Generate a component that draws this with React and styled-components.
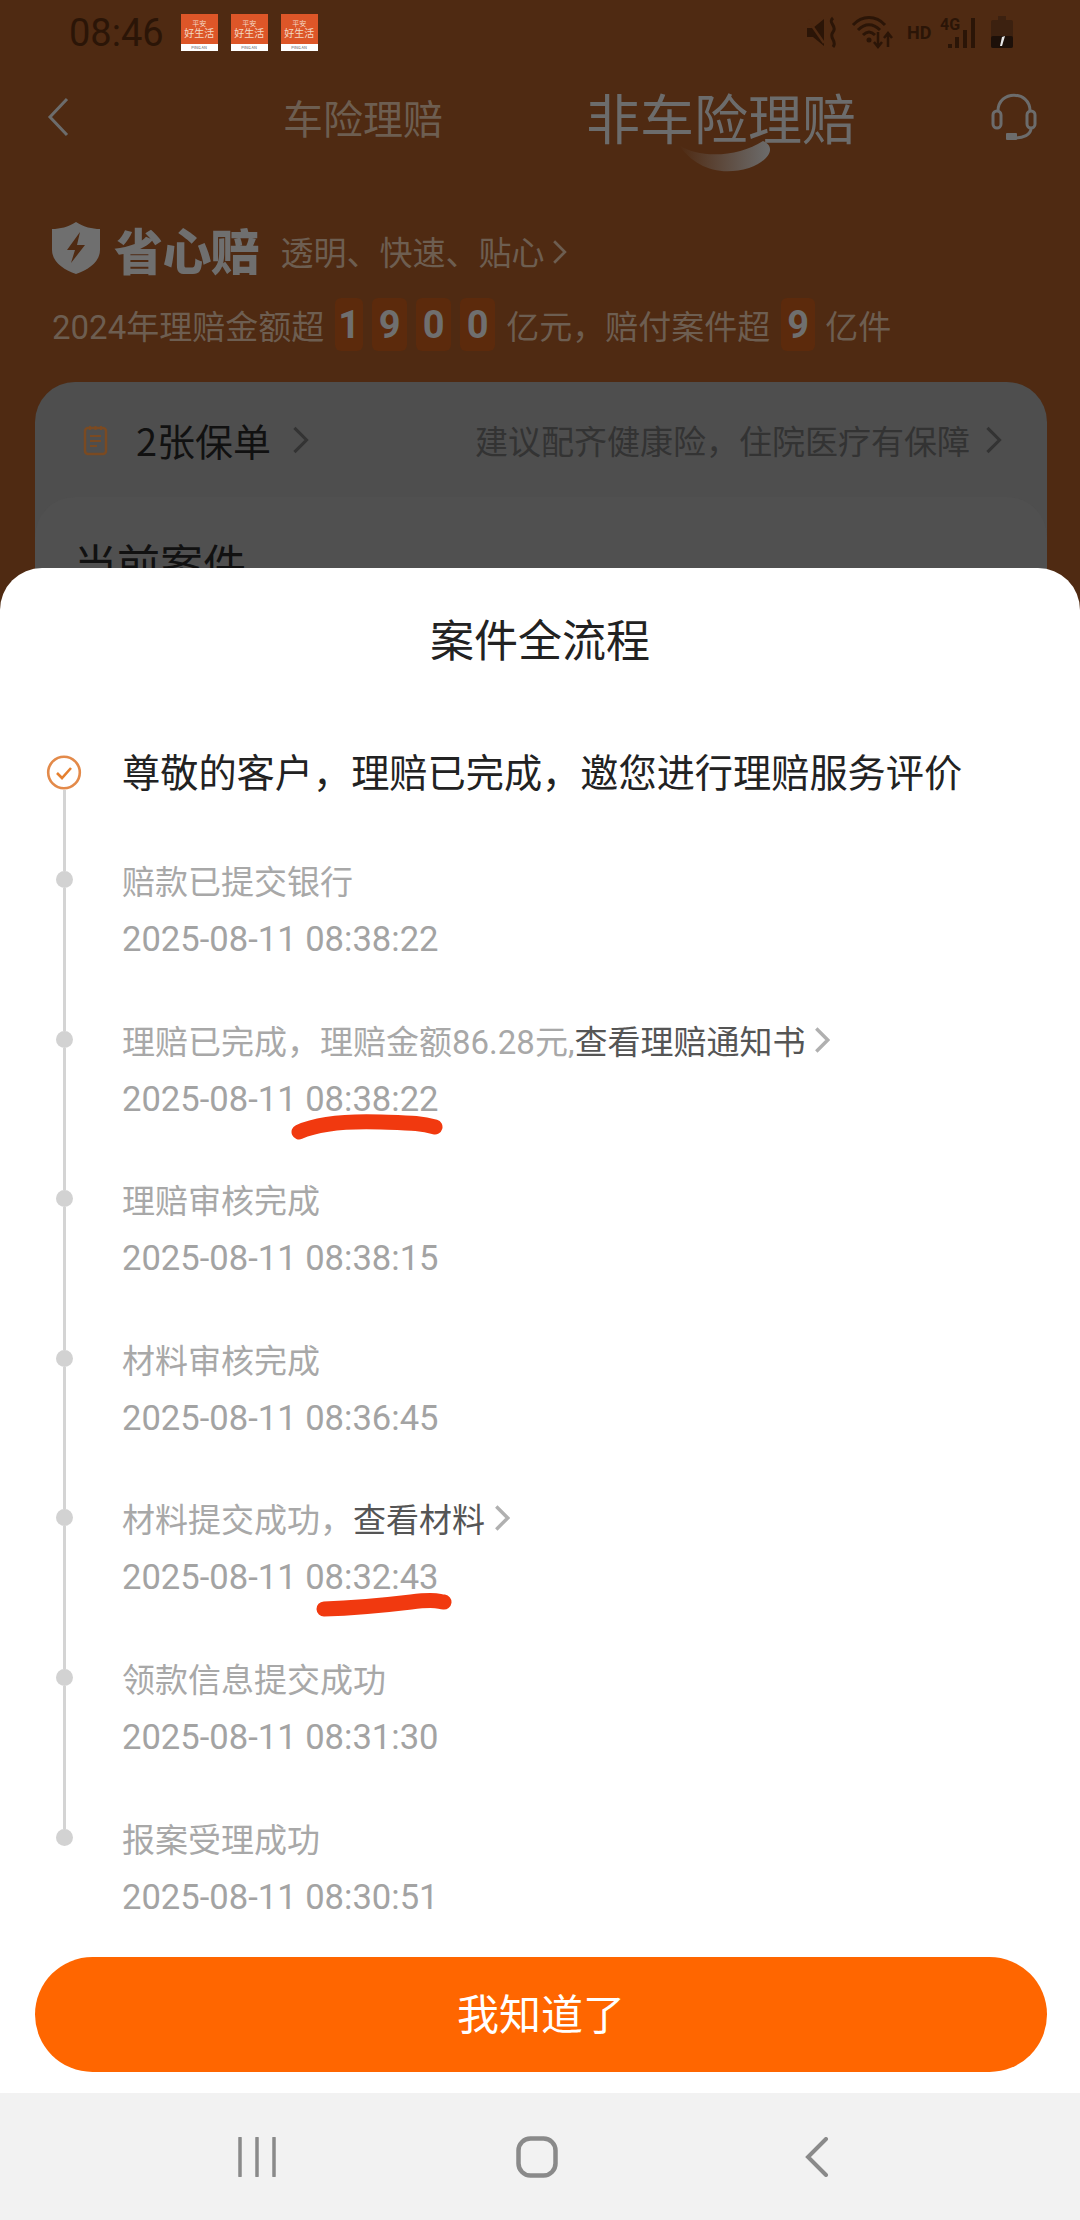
import React from "react";
import styled, { createGlobalStyle } from "styled-components";

const GlobalStyle = createGlobalStyle`
  html, body {
    margin: 0;
    padding: 0;
    background: #fff;
  }
  * {
    box-sizing: border-box;
  }
  body {
    font-family: Roboto, "Noto Sans CJK SC", sans-serif;
  }
`;

// fullwidth comma, written as an escape so it can't get swapped for the ascii one
const COMMA = "\uFF0C";

const Screen = styled.div`
  width: 1080px;
  height: 2220px;
  display: flex;
  flex-direction: column;
  overflow: hidden;
`;

const Backdrop = styled.main`
  position: relative;
  height: 2093px;
  background: #4f2a12;
  overflow: hidden;
`;

/* status bar */
const StatusBar = styled.div`
  height: 64px;
  display: flex;
  align-items: center;
  padding: 0 67px 0 69px;
`;

const Clock = styled.span`
  font-size: 38px;
  color: #2b1507;
  margin-right: 17px;
  margin-top: 2px;
`;

const AppBadge = styled.div`
  width: 37px;
  height: 37px;
  margin-right: 13px;
  background: #fff;
  display: flex;
  flex-direction: column;
  font-family: "Noto Sans CJK SC", sans-serif;
  overflow: hidden;
`;

const BadgeTop = styled.div`
  height: 30px;
  flex: none;
  background: #dd5628;
  color: #f3d9c4;
  display: flex;
  flex-direction: column;
  align-items: center;
  justify-content: center;
`;

const BadgeSmall = styled.span`
  font-size: 7px;
  line-height: 8px;
`;

const BadgeBig = styled.span`
  font-size: 10px;
  line-height: 12px;
  white-space: nowrap;
`;

const BadgeFoot = styled.span`
  font-size: 4px;
  line-height: 7px;
  text-align: center;
  color: #555;
`;

const StatusIcons = styled.div`
  margin-left: auto;
  display: flex;
  align-items: center;
  gap: 14px;
`;

const StatusSvg = styled.svg`
  display: block;
  fill: none;
  stroke: #2b1507;
  overflow: visible;
`;

const HdLabel = styled.span`
  font-size: 18px;
  font-weight: 700;
  color: #2b1507;
  width: 26px;
  margin-right: -7px;
`;

/* title row */
const TitleRow = styled.div`
  height: 106px;
  display: flex;
  align-items: center;
  padding: 0 43px 0 47px;
  font-family: "Noto Sans CJK SC", sans-serif;
`;

const Tab = styled.span`
  position: relative;
  line-height: 1;
  color: ${(p) => (p.$active ? "#6c6c6c" : "#6d5e51")};
  font-size: ${(p) => (p.$active ? "54px" : "40px")};
  margin-left: ${(p) => (p.$active ? "143px" : "214px")};
`;

const TabSmile = styled.svg`
  position: absolute;
  left: 93px;
  top: 51px;
`;

const NavIcon = styled.svg`
  display: block;
  fill: none;
  flex: none;
`;

const Push = styled.div`
  margin-left: auto;
`;

/* promo */
const PromoRow = styled.div`
  height: 78px;
  margin-top: 39px;
  display: flex;
  align-items: center;
  padding-left: 52px;
  font-family: "Noto Sans CJK SC", sans-serif;
`;

const PromoName = styled.span`
  margin-left: 14px;
  font-size: 49px;
  font-weight: 900;
  line-height: 1;
  color: #6f6f6f;
  letter-spacing: -0.5px;
`;

const PromoText = styled.span`
  margin-left: 21px;
  margin-right: 7px;
  margin-top: 6px;
  font-size: 33px;
  color: #6d5e51;
`;

const StatsRow = styled.div`
  height: 75px;
  display: flex;
  align-items: center;
  padding-left: 52px;
  font-size: 33px;
  color: #6d5e51;
`;

const Digit = styled.span`
  width: ${(p) => p.$w || 35}px;
  height: 53px;
  margin-left: ${(p) => p.$gap || 9}px;
  margin-right: ${(p) => p.$after || 0}px;
  border-radius: 6px;
  background: #5c2a0c;
  color: #6f6f6f;
  font-weight: 700;
  font-size: 38px;
  display: flex;
  align-items: center;
  justify-content: center;
`;

/* card behind the sheet */
const Card = styled.section`
  margin: 20px 33px 0 35px;
  background: #4e4e4e;
  border-radius: 40px 40px 0 0;
  font-family: "Noto Sans CJK SC", sans-serif;
`;

const PolicyRow = styled.div`
  height: 115px;
  display: flex;
  align-items: center;
  padding: 0 45px 0 48px;
`;

const PolicyCount = styled.span`
  margin-left: 28px;
  margin-right: 21px;
  font-size: 38px;
  color: #111;
`;

const PolicyHint = styled.span`
  margin-left: auto;
  margin-right: 15px;
  font-size: 33px;
  color: #333;
`;

const CaseCard = styled.div`
  height: 300px;
  background: #505050;
  border-radius: 40px 40px 0 0;
  padding: 34px 39px;
  font-size: 43px;
  color: #111;
`;

/* bottom sheet */
const Sheet = styled.section`
  position: absolute;
  left: 0;
  right: 0;
  top: 568px;
  bottom: 0;
  background: #fff;
  border-radius: 42px 42px 0 0;
  display: flex;
  flex-direction: column;
`;

const SheetTitle = styled.h2`
  margin: 0;
  height: 140px;
  line-height: 140px;
  text-align: center;
  font-size: 44px;
  font-weight: 400;
  color: #222;
  font-family: "Noto Sans CJK SC", sans-serif;
`;

const Timeline = styled.div`
  padding: 32px 0 0 46px;
`;

const Step = styled.div`
  display: flex;
  gap: 40px;
  height: ${(p) => (p.$head ? "114px" : p.$last ? "130px" : "159.6px")};
`;

const Rail = styled.div`
  width: 36px;
  flex: none;
  display: flex;
  flex-direction: column;
  align-items: center;
`;

const RailLine = styled.div`
  width: 3px;
  background: #d4d4d4;
  height: ${(p) => (p.$fixed ? `${p.$fixed}px` : "auto")};
  flex: ${(p) => (p.$fixed ? "none" : "1")};
`;

const Dot = styled.div`
  width: 17px;
  height: 17px;
  border-radius: 50%;
  background: #d2d2d2;
  flex: none;
`;

const HeadIcon = styled.svg`
  display: block;
  flex: none;
  margin-top: 15px;
`;

const HeadText = styled.div`
  font-size: 38.2px;
  line-height: 62px;
  color: #222;
  white-space: nowrap;
  font-family: "Noto Sans CJK SC", sans-serif;
`;

const StepBody = styled.div`
  flex: 1;
`;

const StepTitle = styled.div`
  display: flex;
  align-items: center;
  height: 57px;
  padding-bottom: 5px;
  font-size: 33px;
  color: #a8a8a8;
  white-space: nowrap;
`;

const StepLink = styled.span`
  color: #555;
`;

const Chevron = styled.svg`
  display: block;
  fill: none;
  flex: none;
  margin-left: ${(p) => p.$gap || 0}px;
  margin-top: ${(p) => p.$top || 0}px;
`;

const StepDate = styled.div`
  position: relative;
  height: 57px;
  line-height: 57px;
  font-size: 34.6px;
  color: #a3a3a3;
  white-space: nowrap;
`;

const Scribble = styled.svg`
  position: absolute;
  left: ${(p) => p.$left}px;
  top: ${(p) => p.$top}px;
  fill: none;
  stroke: #f1390f;
  stroke-width: 15;
  stroke-linecap: round;
`;

const ConfirmButton = styled.button`
  margin: auto 33px 21px 35px;
  height: 115px;
  padding: 0 0 6px;
  flex: none;
  border: 0;
  border-radius: 58px;
  background: #ff6600;
  color: #fff;
  font-size: 42px;
  font-family: "Noto Sans CJK SC", sans-serif;
`;

/* system nav */
const SystemNav = styled.nav`
  height: 127px;
  background: #f2f2f2;
  display: flex;
  align-items: center;
  justify-content: center;
  padding-right: 6px;
`;

const SystemSlot = styled.div`
  width: 280px;
  display: flex;
  justify-content: center;
`;

const steps = [
  { title: "赔款已提交银行", date: "2025-08-11 08:38:22" },
  {
    title: `理赔已完成${COMMA}理赔金额86.28元,`,
    link: "查看理赔通知书",
    date: "2025-08-11 08:38:22",
    chevronGap: 9,
    scribble: { left: 169, top: 43, width: 152, height: 26, d: "M8 18 C30 8 60 7 90 8 S130 9 144 13" }
  },
  { title: "理赔审核完成", date: "2025-08-11 08:38:15" },
  { title: "材料审核完成", date: "2025-08-11 08:36:45" },
  {
    title: `材料提交成功${COMMA}`,
    link: "查看材料",
    date: "2025-08-11 08:32:43",
    chevronGap: 9,
    scribble: { left: 194, top: 44, width: 136, height: 24, d: "M8 16 C40 15 70 12 95 9 S120 8 128 9" }
  },
  { title: "领款信息提交成功", date: "2025-08-11 08:31:30" },
  { title: "报案受理成功", date: "2025-08-11 08:30:51" }
];

const SmallChevron = ({ color, w = 14, h = 24, width = 3, gap, top }) => (
  <Chevron $gap={gap} $top={top} width={w} height={h} viewBox="0 0 14 24">
    <path d="M2 2 L12 12 L2 22" stroke={color} strokeWidth={width} />
  </Chevron>
);

const Badge = () => (
  <AppBadge>
    <BadgeTop>
      <BadgeSmall>平安</BadgeSmall>
      <BadgeBig>好生活</BadgeBig>
    </BadgeTop>
    <BadgeFoot>PING AN</BadgeFoot>
  </AppBadge>
);

const App = () => {
  return (
    <Screen>
      <GlobalStyle />
      <Backdrop>
        <StatusBar>
          <Clock>08:46</Clock>
          <Badge />
          <Badge />
          <Badge />
          <StatusIcons>
            <StatusSvg width="31" height="31" viewBox="0 0 31 31">
              <path d="M0 11h6l11-9v27l-11-9H0z" fill="#2b1507" stroke="none" />
              <path d="M1 3 L17 26" stroke="#4f2a12" strokeWidth="2.5" />
              <path d="M26 1 c-6 5 5 8 0 14 c-5 6 5 9 0 15" strokeWidth="3" />
            </StatusSvg>
            <StatusSvg width="41" height="33" viewBox="0 0 41 33">
              <path d="M1 9 C10 -1 24 -1 33 9" strokeWidth="3" />
              <path d="M6 14 C13 7 21 7 28 14" strokeWidth="3" />
              <path d="M11 19 C15 15 19 15 23 19" strokeWidth="3" />
              <circle cx="17" cy="24" r="2.5" fill="#2b1507" stroke="none" />
              <path d="M26 16 V31 M22 26 L26 31 L30 26 M36 31 V18 M32 22 L36 17 L40 22" strokeWidth="2.5" />
            </StatusSvg>
            <HdLabel>HD</HdLabel>
            <StatusSvg width="37" height="33" viewBox="0 0 37 33">
              <text x="0" y="14" fontSize="16" fontWeight="700" fill="#2b1507" stroke="none" fontFamily="Roboto">4G</text>
              <path d="M10 32V28 M17 32V21 M25 32V14 M33 32V2" strokeWidth="4" />
            </StatusSvg>
            <StatusSvg width="22" height="32" viewBox="0 0 22 32">
              <rect x="7" y="0" width="8" height="4" fill="#3c2110" stroke="none" />
              <rect x="0" y="4" width="22" height="28" rx="2" fill="#3c2110" stroke="none" />
              <rect x="0" y="20" width="22" height="12" rx="2" fill="#1d1009" stroke="none" />
              <path d="M9 30 L11 21 L14 20 L11 30z" fill="#e8e8e8" stroke="none" />
            </StatusSvg>
          </StatusIcons>
        </StatusBar>

        <TitleRow>
          <NavIcon width="22" height="40" viewBox="0 0 22 40">
            <path d="M20 2 L3 20 L20 38" stroke="#6c6c6c" strokeWidth="3" />
          </NavIcon>
          <Tab>车险理赔</Tab>
          <Tab $active>
            非车险理赔
            <TabSmile width="94" height="32" viewBox="0 0 94 32">
              <defs>
                <linearGradient id="smile" x1="0" x2="1" y1="0" y2="0">
                  <stop offset="0" stopColor="#6c6c6c" stopOpacity="0" />
                  <stop offset="1" stopColor="#6c6c6c" />
                </linearGradient>
              </defs>
              <path d="M0 4 C20 18 60 16 84 0 C98 6 90 20 70 27 C40 36 15 26 0 4z" fill="url(#smile)" />
            </TabSmile>
          </Tab>
          <Push>
            <NavIcon width="46" height="48" viewBox="0 0 46 48">
              <path d="M7 18 C7 -3 39 -3 39 18" stroke="#6c6c6c" strokeWidth="3" />
              <rect x="2" y="18" width="8" height="17" rx="4" stroke="#6c6c6c" strokeWidth="3" />
              <rect x="36" y="18" width="8" height="17" rx="4" stroke="#6c6c6c" strokeWidth="3" />
              <path d="M40 35 C40 42 32 45 24 45" stroke="#6c6c6c" strokeWidth="3" />
              <rect x="15" y="40" width="11" height="7" rx="1" fill="#6c6c6c" />
            </NavIcon>
          </Push>
        </TitleRow>

        <PromoRow>
          <NavIcon width="48" height="52" viewBox="0 0 48 52">
            <path d="M24 0 C32 5 40 7 48 7 V28 C48 40 36 48 24 52 C12 48 0 40 0 28 V7 C8 7 16 5 24 0z" fill="#6f6f6f" />
            <path d="M28 10 L15 28 H23 L19 41 L33 23 H25z" fill="#4f2a12" />
          </NavIcon>
          <PromoName>省心赔</PromoName>
          <PromoText>透明、快速、贴心</PromoText>
          <SmallChevron color="#6d5e51" w={15} h={26} width={2.5} top={8} />
        </PromoRow>

        <StatsRow>
          2024年理赔金额超
          <Digit $w={28} $gap={11}>1</Digit>
          <Digit>9</Digit>
          <Digit>0</Digit>
          <Digit $after={11}>0</Digit>
          {`亿元${COMMA}赔付案件超`}
          <Digit $w={34} $gap={11} $after={10}>9</Digit>
          亿件
        </StatsRow>

        <Card>
          <PolicyRow>
            <NavIcon width="25" height="32" viewBox="0 0 25 32">
              <rect x="2" y="4" width="21" height="26" rx="3" stroke="#7a4a22" strokeWidth="2.5" />
              <path d="M7 2V6 M12.5 2V6 M18 2V6" stroke="#7a4a22" strokeWidth="2" />
              <path d="M7 12H18 M7 17H18 M7 22H14" stroke="#7a4a22" strokeWidth="2" />
            </NavIcon>
            <PolicyCount>2张保单</PolicyCount>
            <SmallChevron color="#333" w={17} h={30} width={2.5} />
            <PolicyHint>{`建议配齐健康险${COMMA}住院医疗有保障`}</PolicyHint>
            <SmallChevron color="#333" w={17} h={30} width={2.5} />
          </PolicyRow>
          <CaseCard>当前案件</CaseCard>
        </Card>

        <Sheet>
          <SheetTitle>案件全流程</SheetTitle>
          <Timeline>
            <Step $head>
              <Rail>
                <HeadIcon width="36" height="35" viewBox="0 0 36 35">
                  <circle cx="18" cy="17.5" r="15.8" fill="none" stroke="#e38a4a" strokeWidth="2.6" />
                  <path d="M11 18 L16 23 L25 13" fill="none" stroke="#e5802f" strokeWidth="2.6" />
                </HeadIcon>
                <RailLine />
              </Rail>
              <HeadText>{`尊敬的客户${COMMA}理赔已完成${COMMA}邀您进行理赔服务评价`}</HeadText>
            </Step>
            {steps.map((step, i) => (
              <Step key={i} $last={i === steps.length - 1}>
                <Rail>
                  <RailLine $fixed={17} />
                  <Dot />
                  {i < steps.length - 1 && <RailLine />}
                </Rail>
                <StepBody>
                  <StepTitle>
                    {step.title}
                    {step.link && <StepLink>{step.link}</StepLink>}
                    {step.link && <SmallChevron color="#b0b0b0" w={16} h={28} width={3} gap={step.chevronGap} />}
                  </StepTitle>
                  <StepDate>
                    {step.date}
                    {step.scribble && (
                      <Scribble
                        $left={step.scribble.left}
                        $top={step.scribble.top}
                        width={step.scribble.width}
                        height={step.scribble.height}
                        viewBox={`0 0 ${step.scribble.width} ${step.scribble.height}`}
                      >
                        <path d={step.scribble.d} />
                      </Scribble>
                    )}
                  </StepDate>
                </StepBody>
              </Step>
            ))}
          </Timeline>
          <ConfirmButton>我知道了</ConfirmButton>
        </Sheet>
      </Backdrop>

      <SystemNav>
        <SystemSlot>
          <NavIcon width="38" height="40" viewBox="0 0 38 40">
            <path d="M2 1V39 M19 1V39 M36 1V39" stroke="#8a8a8a" strokeWidth="3.5" strokeLinecap="round" />
          </NavIcon>
        </SystemSlot>
        <SystemSlot>
          <NavIcon width="42" height="42" viewBox="0 0 42 42">
            <rect x="2.5" y="2.5" width="37" height="37" rx="12" stroke="#8a8a8a" strokeWidth="4.5" />
          </NavIcon>
        </SystemSlot>
        <SystemSlot>
          <NavIcon width="24" height="40" viewBox="0 0 24 40">
            <path d="M21 2 L3 20 L21 38" stroke="#8a8a8a" strokeWidth="4" strokeLinecap="round" />
          </NavIcon>
        </SystemSlot>
      </SystemNav>
    </Screen>
  );
};

export default App;
